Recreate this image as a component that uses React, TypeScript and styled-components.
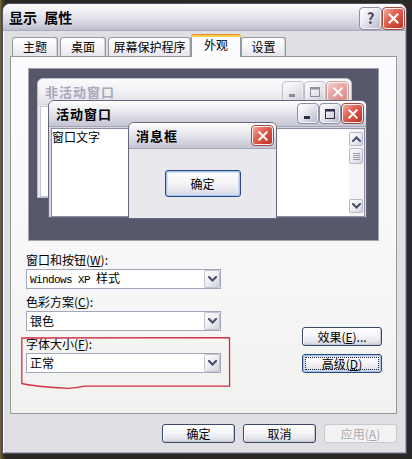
import React from "react";
import styled, { createGlobalStyle } from "styled-components";

const UI_FONT = `"Noto Sans CJK SC", "Noto Sans", sans-serif`;

const GlobalStyle = createGlobalStyle`
  html, body { margin: 0; padding: 0; }
  body {
    width: 412px;
    height: 459px;
    overflow: hidden;
    background: linear-gradient(90deg, #7d6c34 0px, #4b4329 2px, #2a2722 6px, #2b2925 100%);
    font-family: ${UI_FONT};
    font-size: 12px;
    color: #000;
  }
  #root { width: 412px; height: 459px; }
`;

const Window = styled.div`
  box-sizing: border-box;
  margin: 3px 0 0 2px;
  width: 405px;
  height: 451px;
  display: flex;
  flex-direction: column;
  background: #e0dfe3;
  border: 1px solid #4e4e66;
  border-radius: 8px 8px 0 0;
  box-shadow: inset 1px 0 0 #ffffff, inset -1px -1px 0 #a6a6b6;
  overflow: hidden;
`;

const TitleBar = styled.div`
  flex: none;
  height: 26px;
  display: flex;
  align-items: center;
  padding: 0 2px 0 6px;
  background: linear-gradient(180deg, #ffffff 0%, #f3f3f7 20%, #e3e3eb 50%, #d2d2de 78%, #bdbdcc 100%);
  border-bottom: 1px solid #a9a9bc;
`;

const TitleText = styled.div`
  flex: 1;
  font-size: 14px;
  font-weight: 700;
  line-height: 18px;
  word-spacing: 4px;
  color: #000;
`;

const TitleButtons = styled.div`
  display: flex;
  gap: 2px;
  margin-top: 2px;
`;

const CapButton = styled.div<{ $red?: boolean; $w?: number; $h?: number; $faded?: boolean }>`
  box-sizing: border-box;
  width: ${(p) => p.$w ?? 21}px;
  height: ${(p) => p.$h ?? 21}px;
  display: flex;
  align-items: center;
  justify-content: center;
  border-radius: 3px;
  border: 1px solid ${(p) => (p.$red ? "#f6f0ee" : "#f4f4f8")};
  outline: 1px solid ${(p) => (p.$red ? "#a04a44" : "#8f8fa6")};
  background: ${(p) =>
    p.$red
      ? "linear-gradient(135deg, #f2b0a4 0%, #e2695a 35%, #cd4334 75%, #b8392c 100%)"
      : "linear-gradient(135deg, #ffffff 0%, #ececf2 35%, #cfcfdc 75%, #b6b6c8 100%)"};
  opacity: ${(p) => (p.$faded ? 0.5 : 1)};
  font-size: 15px;
  font-weight: 700;
  line-height: 16px;
  color: #44445e;
`;

const Body = styled.div`
  flex: 1;
  display: flex;
  flex-direction: column;
  padding: 3px 9px 0 7px;
`;

const TabStrip = styled.div`
  height: 22px;
  display: flex;
  align-items: flex-end;
  padding-left: 2px;
  position: relative;
  z-index: 2;
`;

const Tab = styled.div<{ $w: number; $active?: boolean; $gap?: number }>`
  position: relative;
  box-sizing: border-box;
  width: ${(p) => p.$w}px;
  height: ${(p) => (p.$active ? 23 : 19)}px;
  margin-right: ${(p) => p.$gap ?? 0}px;
  margin-bottom: ${(p) => (p.$active ? -1 : 0)}px;
  display: flex;
  align-items: center;
  justify-content: center;
  padding-bottom: ${(p) => (p.$active ? 3 : 0)}px;
  border: 1px solid #919b9c;
  border-bottom: none;
  border-radius: 3px 3px 0 0;
  background: ${(p) =>
    p.$active ? "#fcfcfe" : "linear-gradient(180deg, #ffffff 0%, #f6f6f8 50%, #e6e6ec 100%)"};
  box-shadow: ${(p) => (p.$active ? "none" : "inset -1px 0 0 #d2d2da")};
  font-size: 12px;
  line-height: 14px;
  &::before {
    content: "";
    display: ${(p) => (p.$active ? "block" : "none")};
    position: absolute;
    left: -1px;
    right: -1px;
    top: -1px;
    height: 3px;
    border-radius: 3px 3px 0 0;
    background: linear-gradient(180deg, #e68b2c 0px, #e68b2c 1px, #ffc73c 1px, #ffd463 3px);
  }
`;

const Panel = styled.div`
  position: relative;
  box-sizing: border-box;
  height: 358px;
  border: 1px solid #919b9c;
  background: linear-gradient(180deg, #fcfcfe 0%, #f7f7f8 60%, #f1f1ef 100%);
  display: flex;
  flex-direction: column;
`;

const Preview = styled.div`
  position: relative;
  box-sizing: border-box;
  height: 173px;
  margin: 11px 17px 0 17px;
  background: #57576b;
  border: 1px solid #a2a2ae;
  overflow: hidden;
`;

const MiniWindow = styled.div<{ $x: number; $y: number; $w: number; $h: number; $inactive?: boolean; $msg?: boolean }>`
  position: absolute;
  left: ${(p) => p.$x}px;
  top: ${(p) => p.$y}px;
  width: ${(p) => p.$w}px;
  height: ${(p) => p.$h}px;
  box-sizing: border-box;
  display: flex;
  flex-direction: column;
  border: 1px solid ${(p) => (p.$inactive ? "#bdbdca" : "#66667c")};
  border-radius: 6px 6px 0 0;
  background: ${(p) => (p.$inactive ? "#ebebef" : p.$msg ? "#e9e9ed" : "#d5d5df")};
  overflow: hidden;
`;

const MiniTitle = styled.div<{ $inactive?: boolean }>`
  flex: none;
  height: 25px;
  display: flex;
  align-items: center;
  padding: 0 3px 0 7px;
  background: ${(p) =>
    p.$inactive
      ? "linear-gradient(180deg, #fbfbfc 0%, #f1f1f4 50%, #e0e0e8 100%)"
      : "linear-gradient(180deg, #ffffff 0%, #f1f1f5 25%, #dedee7 60%, #c4c4d3 100%)"};
  border-bottom: 1px solid ${(p) => (p.$inactive ? "#d6d6de" : "#a6a6ba")};
`;

const MiniTitleText = styled.span<{ $inactive?: boolean }>`
  flex: 1;
  font-size: 13px;
  font-weight: 700;
  line-height: 16px;
  letter-spacing: 1px;
  color: ${(p) => (p.$inactive ? "#a9a9ba" : "#000")};
  white-space: nowrap;
`;

const MiniButtons = styled.div`
  display: flex;
  gap: 2px;
`;

const Client = styled.div<{ $inactive?: boolean }>`
  flex: 1;
  display: flex;
  margin: 1px 1px 0 2px;
  background: #ffffff;
  border: 1px solid ${(p) => (p.$inactive ? "#c6c6d0" : "#8e8ea2")};
`;

const ClientText = styled.div`
  flex: 1;
  padding: 1px 0 0 0;
  font-size: 12px;
  line-height: 14px;
`;

const ScrollBar = styled.div`
  box-sizing: border-box;
  width: 15px;
  flex: none;
  display: flex;
  flex-direction: column;
  gap: 2px;
  padding: 3px 1px 3px 0;
  background: #f4f4f6;
`;

const ScrollBtn = styled.div<{ $h?: number }>`
  box-sizing: border-box;
  height: ${(p) => p.$h ?? 14}px;
  border: 1px solid #b8b8c8;
  border-radius: 2px;
  background: linear-gradient(135deg, #ffffff 0%, #ececf2 50%, #d4d4e0 100%);
  display: flex;
  align-items: center;
  justify-content: center;
`;

const ScrollSpacer = styled.div`
  flex: 1;
`;

const MsgBody = styled.div`
  flex: 1;
  display: flex;
  align-items: center;
  justify-content: center;
`;

const Lower = styled.div`
  display: flex;
  justify-content: space-between;
  align-items: flex-end;
  margin-top: 12px;
  padding: 0 14px 0 15px;
`;

const Fields = styled.div`
  display: flex;
  flex-direction: column;
  gap: 6px;
`;

const Field = styled.div`
  display: flex;
  flex-direction: column;
`;

const Label = styled.div`
  height: 14px;
  margin-bottom: 2px;
  font-size: 12px;
  line-height: 14px;
  white-space: nowrap;
`;

const Select = styled.div`
  box-sizing: border-box;
  width: 195px;
  height: 20px;
  display: flex;
  align-items: center;
  padding: 0 0 0 3px;
  background: #ffffff;
  border: 1px solid #a3a8b8;
`;

const SelectValue = styled.span`
  flex: 1;
  font-size: 12px;
  line-height: 16px;
  white-space: nowrap;
`;

const Latin = styled.span`
  font-family: "Liberation Mono", monospace;
  font-size: 11px;
  letter-spacing: -0.6px;
`;

const DropButton = styled.span`
  box-sizing: border-box;
  width: 16px;
  height: 18px;
  display: flex;
  align-items: center;
  justify-content: center;
  border: 1px solid #c3c3cf;
  border-radius: 2px;
  background: linear-gradient(135deg, #ffffff 0%, #ededf2 50%, #d2d2de 100%);
`;

const SideButtons = styled.div`
  display: flex;
  flex-direction: column;
  gap: 8px;
`;

const Button = styled.div<{ $w?: number; $h?: number; $default?: boolean; $focus?: boolean; $disabled?: boolean }>`
  position: relative;
  box-sizing: border-box;
  width: ${(p) => p.$w ?? 73}px;
  height: ${(p) => p.$h ?? 19}px;
  display: flex;
  align-items: center;
  justify-content: center;
  border: 1px solid ${(p) => (p.$disabled ? "#c8c8d0" : p.$default ? "#2c4a80" : "#3b4868")};
  border-radius: 3px;
  background: ${(p) =>
    p.$disabled
      ? "#f3f3f4"
      : "linear-gradient(180deg, #ffffff 0%, #f6f6f9 45%, #e4e4ec 80%, #d2d2dc 100%)"};
  box-shadow: ${(p) =>
    p.$disabled
      ? "none"
      : p.$default
      ? "inset 0 0 0 1px #a9c2ea, inset 0 0 0 2px #d2def4"
      : "inset -1px -1px 0 #c6c6d4, inset 1px 1px 0 #ffffff"};
  font-size: 12px;
  line-height: 14px;
  color: ${(p) => (p.$disabled ? "#a9a9b2" : "#000")};
  white-space: nowrap;
  &::after {
    content: "";
    display: ${(p) => (p.$focus ? "block" : "none")};
    position: absolute;
    inset: 2px;
    border: 1px dotted #202030;
  }
`;

const Footer = styled.div`
  display: flex;
  justify-content: flex-end;
  gap: 8px;
  margin-top: 10px;
`;

const Annotation = styled.svg`
  position: absolute;
  left: 10px;
  top: 280px;
  width: 212px;
  height: 56px;
  pointer-events: none;
  overflow: visible;
`;

const Chevron = ({ up = false, color = "#4b4b6a" }: { up?: boolean; color?: string }) => (
  <svg width="9" height="6" viewBox="0 0 9 6">
    <polyline
      points={up ? "1,5 4.5,1.5 8,5" : "1,1 4.5,4.5 8,1"}
      fill="none"
      stroke={color}
      strokeWidth="2"
      strokeLinecap="square"
    />
  </svg>
);

const CloseGlyph = ({ size = 11 }: { size?: number }) => (
  <svg width={size} height={size} viewBox="0 0 11 11">
    <path d="M1.5 1.5 L9.5 9.5 M9.5 1.5 L1.5 9.5" stroke="#ffffff" strokeWidth="2.2" strokeLinecap="square" />
  </svg>
);

const MinGlyph = () => (
  <svg width="12" height="12" viewBox="0 0 12 12">
    <rect x="2" y="8" width="6" height="3" fill="#2e2e44" />
  </svg>
);

const MaxGlyph = () => (
  <svg width="12" height="12" viewBox="0 0 12 12">
    <rect x="1.5" y="1.5" width="9" height="9" fill="none" stroke="#2e2e44" strokeWidth="1" />
    <rect x="1" y="1" width="10" height="2.5" fill="#2e2e44" />
  </svg>
);

const Grip = () => (
  <svg width="7" height="7" viewBox="0 0 7 7">
    <path d="M0 0.5 H7 M0 2.5 H7 M0 4.5 H7 M0 6.5 H7" stroke="#9a9aac" strokeWidth="1" />
  </svg>
);

const MiniCaptionButtons = ({ faded }: { faded?: boolean }) => (
  <MiniButtons>
    <CapButton $w={20} $h={19} $faded={faded}>
      <MinGlyph />
    </CapButton>
    <CapButton $w={20} $h={19} $faded={faded}>
      <MaxGlyph />
    </CapButton>
    <CapButton $w={21} $h={19} $red $faded={faded}>
      <CloseGlyph size={10} />
    </CapButton>
  </MiniButtons>
);

export default function App() {
  return (
    <>
      <GlobalStyle />
      <Window>
        <TitleBar>
          <TitleText>显示 属性</TitleText>
          <TitleButtons>
            <CapButton>?</CapButton>
            <CapButton $red>
              <CloseGlyph />
            </CapButton>
          </TitleButtons>
        </TitleBar>
        <Body>
          <TabStrip>
            <Tab $w={46} $gap={2}>主题</Tab>
            <Tab $w={46} $gap={2}>桌面</Tab>
            <Tab $w={83}>屏幕保护程序</Tab>
            <Tab $w={50} $active>外观</Tab>
            <Tab $w={45}>设置</Tab>
          </TabStrip>
          <Panel>
            <Preview>
              <MiniWindow $x={8} $y={9} $w={315} $h={120} $inactive>
                <MiniTitle $inactive>
                  <MiniTitleText $inactive>非活动窗口</MiniTitleText>
                  <MiniCaptionButtons faded />
                </MiniTitle>
                <Client $inactive />
              </MiniWindow>
              <MiniWindow $x={19} $y={31} $w={319} $h={118}>
                <MiniTitle>
                  <MiniTitleText>活动窗口</MiniTitleText>
                  <MiniCaptionButtons />
                </MiniTitle>
                <Client>
                  <ClientText>窗口文字</ClientText>
                  <ScrollBar>
                    <ScrollBtn>
                      <Chevron up />
                    </ScrollBtn>
                    <ScrollBtn $h={16}>
                      <Grip />
                    </ScrollBtn>
                    <ScrollSpacer />
                    <ScrollBtn>
                      <Chevron />
                    </ScrollBtn>
                  </ScrollBar>
                </Client>
              </MiniWindow>
              <MiniWindow $x={99} $y={53} $w={149} $h={97} $msg>
                <MiniTitle>
                  <MiniTitleText>消息框</MiniTitleText>
                  <CapButton $w={21} $h={19} $red>
                    <CloseGlyph size={10} />
                  </CapButton>
                </MiniTitle>
                <MsgBody>
                  <Button $w={76} $h={27} $default>确定</Button>
                </MsgBody>
              </MiniWindow>
            </Preview>
            <Lower>
              <Fields>
                <Field>
                  <Label>
                    窗口和按钮(<u>W</u>):
                  </Label>
                  <Select>
                    <SelectValue>
                      <Latin>Windows XP </Latin>样式
                    </SelectValue>
                    <DropButton>
                      <Chevron />
                    </DropButton>
                  </Select>
                </Field>
                <Field>
                  <Label>
                    色彩方案(<u>C</u>):
                  </Label>
                  <Select>
                    <SelectValue>银色</SelectValue>
                    <DropButton>
                      <Chevron />
                    </DropButton>
                  </Select>
                </Field>
                <Field>
                  <Label>
                    字体大小(<u>F</u>):
                  </Label>
                  <Select>
                    <SelectValue>正常</SelectValue>
                    <DropButton>
                      <Chevron />
                    </DropButton>
                  </Select>
                </Field>
              </Fields>
              <SideButtons>
                <Button $w={80}>
                  效果(<u>E</u>)...
                </Button>
                <Button $w={80} $default $focus>
                  高级(<u>D</u>)
                </Button>
              </SideButtons>
            </Lower>
            <Annotation viewBox="0 0 212 56">
              <path
                d="M0.8 1 L208.5 0.6 L208.6 49 L64 49.2 Q52 51.8 44 51.2 Q14 49.6 0.8 46.5 Z"
                fill="none"
                stroke="#cf2f42"
                strokeWidth="1.3"
                strokeLinejoin="round"
              />
            </Annotation>
          </Panel>
          <Footer>
            <Button>确定</Button>
            <Button>取消</Button>
            <Button $disabled>
              应用(<u>A</u>)
            </Button>
          </Footer>
        </Body>
      </Window>
    </>
  );
}
